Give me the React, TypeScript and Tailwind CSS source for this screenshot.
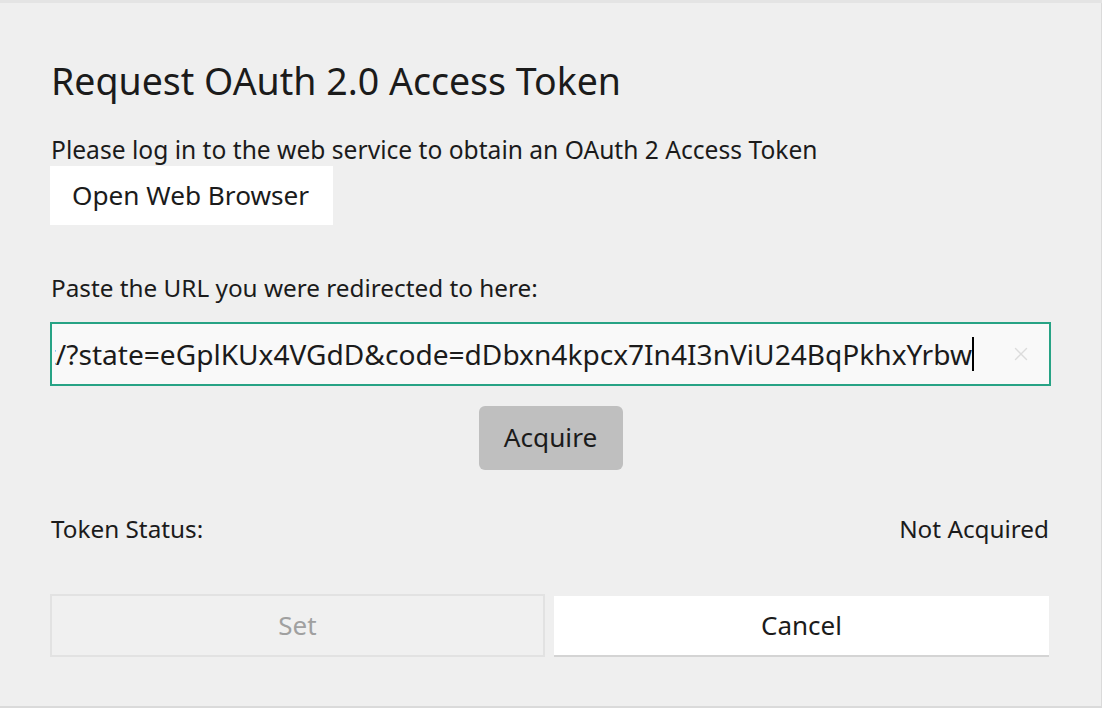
import { X } from 'lucide-react'

const font = { fontFamily: '"Noto Sans", "Open Sans", sans-serif' }

export default function App() {
  return (
    <div
      className="relative flex h-[708px] w-[1102px] flex-col overflow-hidden bg-[#efefef] text-[#1b1b1b]"
      style={font}
    >
      <div className="h-[3px] w-full bg-[#e4e4e4]" />
      <div className="flex flex-1 flex-col border-b-2 border-r border-[#dadada] px-[50px]">
        <h1 className="mt-[54px] pl-px text-[37.5px] leading-[48px] font-normal">
          Request OAuth 2.0 Access Token
        </h1>
        <p className="mt-[30px] pl-px text-[24.6px] leading-[30px]">
          Please log in to the web service to obtain an OAuth 2 Access Token
        </p>
        <button className="mt-px h-[59px] w-[283px] bg-white pl-[22px] text-left text-[26.2px]">
          Open Web Browser
        </button>
        <p className="mt-[48px] pl-px text-[24.3px] leading-[30px]">
          Paste the URL you were redirected to here:
        </p>
        <div className="mt-[19px] flex h-[64px] items-center border-2 border-[#27a385] bg-[#f9f9f9]">
          <div className="ml-[3px] flex w-[919px] items-center justify-end overflow-hidden whitespace-nowrap text-[28.1px] leading-[40px]">
            <span>http://localhost/?state=eGplKUx4VGdD&amp;code=dDbxn4kpcx7In4I3nViU24BqPkhxYrbw</span>
            <span className="h-[34px] w-[2px] shrink-0 bg-black" />
          </div>
          <X className="ml-[36px] text-[#dcdcdc]" size={22} strokeWidth={1.5} />
        </div>
        <div className="mt-[20px] flex justify-center">
          <button className="h-[64px] w-[144px] rounded-md bg-[#bfbfbf] text-[26.2px]">
            Acquire
          </button>
        </div>
        <div className="mt-[44px] flex justify-between pl-px pr-[2px] text-[24.3px] leading-[30px]">
          <span>Token Status:</span>
          <span>Not Acquired</span>
        </div>
        <div className="mt-[50px] flex gap-[9px]">
          <button className="h-[63px] w-[495px] border-2 border-[#e2e2e2] bg-[#f0f0f0] text-[26px] text-[#a0a0a0]">
            Set
          </button>
          <button className="mt-[2px] h-[61px] w-[495px] border-b-2 border-[#d4d4d4] bg-white text-[26px]">
            Cancel
          </button>
        </div>
      </div>
    </div>
  )
}
